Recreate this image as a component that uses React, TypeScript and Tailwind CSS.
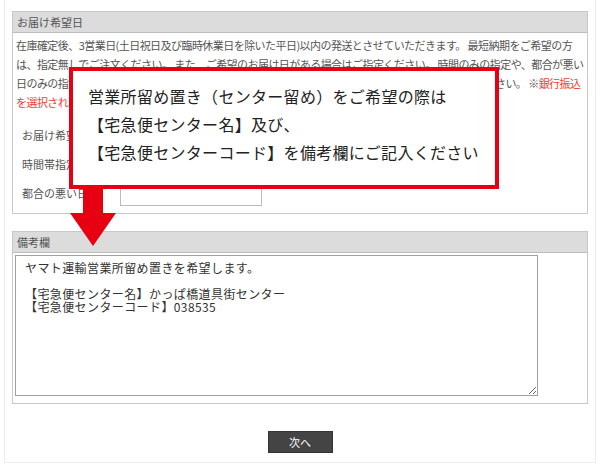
import React from 'react';

const jp = { fontFamily: '"Noto Sans CJK JP", "Noto Sans", sans-serif' };

const formRows = ['お届け希望日', '時間帯指定', '都合の悪い日'];

const Panel = ({ title, children, className = '' }: { title: string; children: React.ReactNode; className?: string }) => (
	<div className={`border border-[#c8c8c8] bg-white ${className}`}>
		<div className="h-[21px] bg-[#dcdcdc] border-b border-[#bdbdbd] flex items-center pl-[4px] text-[11px] text-[#555]">
			{title}
		</div>
		{children}
	</div>
);

export default function App() {
	return (
		<div className="relative w-[600px] h-[470px] bg-white overflow-hidden" style={jp}>
			{/* Outer frame */}
			<div className="ml-[4px] w-[592px] border-x border-b border-[#ececec] pt-[11px] px-[7px] pb-[9px]">
				{/* お届け希望日 */}
				<Panel title="お届け希望日" className="h-[203px]">
					<div className="pl-[3px] pt-[3px] text-[11px] leading-[19px] tracking-[-0.55px] text-[#555] whitespace-nowrap overflow-hidden">
						<div>在庫確定後、3営業日(土日祝日及び臨時休業日を除いた平日)以内の発送とさせていただきます。 最短納期をご希望の方</div>
						<div>は、指定無しでご注文ください。 また、ご希望のお届け日がある場合はご指定ください。 時間のみの指定や、都合が悪い</div>
						<div>
							日のみの指定も可能です。交通事情等により、ご希望に添えない場合もございますので予めご了承ください。 ※
							<span className="text-[#f0402f]">銀行振込</span>
						</div>
						<div className="text-[#f0402f]">を選択された場合は、ご入金確認後の発送となります。</div>
					</div>
					<div className="mt-[9px] pl-[9px]">
						{formRows.map((label) => (
							<div key={label} className="h-[29px] flex items-center">
								<div className="w-[98px] text-[11px] text-[#555]">{label}</div>
								<div className="w-[142px] h-[24px] border border-[#bbb] bg-white" />
							</div>
						))}
					</div>
				</Panel>

				{/* 備考欄 */}
				<Panel title="備考欄" className="mt-[17px] h-[173px]">
					<textarea
						className="block ml-[2px] mt-[2px] w-[523px] h-[141px] border border-[#a0a0a0] px-[9px] py-[5px] text-[12px] leading-[13px] tracking-[0.4px] text-[#333] outline-none"
						style={jp}
						defaultValue={'ヤマト運輸営業所留め置きを希望します。\n\n【宅急便センター名】かっぱ橋道具街センター\n【宅急便センターコード】038535'}
					/>
				</Panel>

				<div className="mt-[27px] flex justify-center">
					<button className="w-[65px] h-[22px] bg-[#444] text-white text-[11px] border border-[#333]">次へ</button>
				</div>
			</div>

			{/* Callout overlay */}
			<div className="absolute left-[69px] top-[67px] w-[430px] h-[122px] border-4 border-[#e60012] bg-white pl-[15px] pt-[11px] text-[16px] leading-[28px] tracking-[0.3px] text-[#222] whitespace-nowrap">
				<div>営業所留め置き（センター留め）をご希望の際は</div>
				<div>【宅急便センター名】及び、</div>
				<div>【宅急便センターコード】を備考欄にご記入ください</div>
			</div>
			<svg className="absolute left-[68px] top-[188px]" width="50" height="60" viewBox="0 0 50 60">
				<rect x="15" y="0" width="20" height="26" fill="#e60012" />
				<polygon points="2,25 48,25 25,58" fill="#e60012" />
			</svg>
		</div>
	);
}
